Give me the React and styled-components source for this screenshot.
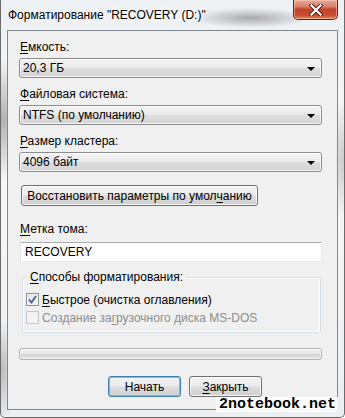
import React from 'react';
import styled, {createGlobalStyle} from 'styled-components';

const GlobalStyle = createGlobalStyle`
  html, body {
    margin:           0;
    padding:          0;
    width:            345px;
    height:           418px;
    overflow:         hidden;
    background:       #ffffff;
  }
  body {
    font-family:      "Liberation Sans", Arial, sans-serif;
    font-size:        12px;
    color:            #000;
  }
`;

const Window = styled.div`
  position:         relative;
  box-sizing:       border-box;
  width:            345px;
  height:           418px;
  display:          flex;
  flex-direction:   column;
  padding:          0 6px 7px 6px;
  border-left:      1px solid #6b6b6b;
  border-right:     1px solid #6b6b6b;
  border-bottom:    1px solid #6b6b6b;
  border-radius:    0 0 5px 5px;
  background:
    radial-gradient(ellipse 40px 60px at 0px 120px, rgba(120,120,120,0.55), rgba(120,120,120,0) 100%),
    radial-gradient(ellipse 20px 50px at 0px 370px, rgba(120,120,120,0.45), rgba(120,120,120,0) 100%),
    radial-gradient(ellipse 60px 10px at 250px 18px, rgba(110,110,110,0.55), rgba(110,110,110,0) 100%),
    radial-gradient(ellipse 30px 60px at 345px 160px, rgba(150,150,150,0.45), rgba(150,150,150,0) 100%),
    linear-gradient(180deg, #eef1f4 0%, #f6f7f8 40%, #eceff2 100%);
`;

const TitleBar = styled.div`
  height:           30px;
  display:          flex;
  align-items:      flex-start;
  justify-content:  space-between;
  margin-left:      -6px;
  margin-right:     -6px;
  padding-left:     7px;
  padding-right:    6px;
`;

const Title = styled.div`
  margin-top:       8px;
  font-size:        12px;
  color:            #000;
  text-shadow:      0 0 6px #fff, 0 0 8px #fff;
  white-space:      nowrap;
`;

const CloseButton = styled.div`
  width:            45px;
  height:           20px;
  box-sizing:       border-box;
  display:          flex;
  align-items:      center;
  justify-content:  center;
  border:           1px solid #5e2418;
  border-top:       none;
  border-radius:    0 0 5px 5px;
  background:       linear-gradient(180deg, #e9a99a 0%, #d77e6a 35%, #c3412a 50%, #c84d30 80%, #e08a5e 100%);
  box-shadow:       inset 0 0 0 1px rgba(255,210,190,0.55);
`;

const Client = styled.div`
  flex:             1;
  box-sizing:       border-box;
  background:       #f0f0f0;
  border:           1px solid #828790;
  padding:          9px 15px 0 11px;
  display:          flex;
  flex-direction:   column;
`;

const Label = styled.div`
  line-height:      15px;
  height:           15px;
  padding-left:     1px;
  white-space:      nowrap;
`;

const Key = styled.span`
  text-decoration:  underline;
  text-underline-offset: 2px;
`;

const Field = styled.div`
  display:          flex;
  flex-direction:   column;
  gap:              ${p => (p.gap === undefined ? 3 : p.gap)}px;
  margin-bottom:    ${p => (p.after === undefined ? 9 : p.after)}px;
`;

const Combo = styled.div`
  height:           20px;
  box-sizing:       border-box;
  border:           1px solid #8c8c8c;
  border-radius:    3px;
  background:       linear-gradient(180deg, #f3f3f3 0%, #ebebeb 48%, #dddddd 52%, #d4d4d4 100%);
  box-shadow:       inset 0 0 0 1px rgba(255,255,255,0.7);
  display:          flex;
  align-items:      center;
  justify-content:  space-between;
  padding:          0 6px 0 3px;
`;

const Arrow = styled.div`
  width:            0;
  height:           0;
  border-left:      4px solid transparent;
  border-right:     4px solid transparent;
  border-top:       4px solid #000;
  margin-top:       1px;
`;

const Button = styled.div`
  box-sizing:       border-box;
  height:           21px;
  width:            ${p => p.width}px;
  margin-left:      ${p => p.indent || 0}px;
  display:          flex;
  align-items:      center;
  justify-content:  center;
  border:           1px solid ${p => (p.primary ? '#3c7fb1' : '#707070')};
  border-radius:    3px;
  background:       linear-gradient(180deg, #f2f2f2 0%, #ebebeb 48%, #dddddd 52%, #cfcfcf 100%);
  box-shadow:       inset 0 0 0 1px ${p => (p.primary ? '#48d2fb' : 'rgba(255,255,255,0.8)')};
  white-space:      nowrap;
`;

const Input = styled.div`
  height:           20px;
  box-sizing:       border-box;
  background:       #fff;
  border:           1px solid #e3e9ef;
  border-top-color: #abadb3;
  border-left-color:#e2e3ea;
  display:          flex;
  align-items:      center;
  padding-left:     4px;
  margin-left:      1px;
`;

const GroupBox = styled.fieldset`
  margin:           0 1px 15px 3px;
  padding:          7px 0 7px 3px;
  border:           1px solid #d5dfe5;
  border-radius:    3px;
  box-shadow:       inset 0 0 0 1px #fff;
  display:          flex;
  flex-direction:   column;
  gap:              3px;
`;

const Legend = styled.legend`
  padding:          0 2px;
  margin-left:      2px;
  line-height:      15px;
`;

const CheckRow = styled.div`
  display:          flex;
  align-items:      center;
  gap:              3px;
  height:           15px;
  color:            ${p => (p.disabled ? '#8d8d8d' : '#000')};
  white-space:      nowrap;
`;

const Box = styled.div`
  width:            13px;
  height:           13px;
  box-sizing:       border-box;
  border:           1px solid ${p => (p.disabled ? '#c8c8c8' : '#8e8f8f')};
  background:       ${p => (p.disabled ? '#f4f4f4' : 'linear-gradient(135deg, #dcdcdc 0%, #f6f6f6 100%)')};
  box-shadow:       inset 0 0 0 1px ${p => (p.disabled ? '#f0f0f0' : '#f4f4f4')};
  display:          flex;
  align-items:      center;
  justify-content:  center;
`;

const Progress = styled.div`
  height:           12px;
  box-sizing:       border-box;
  border:           1px solid #b2b2b2;
  border-radius:    3px;
  background:       linear-gradient(180deg, #f3f3f3 0%, #e6e6e6 45%, #d4d4d4 55%, #e2e2e2 100%);
  box-shadow:       inset 0 0 0 1px rgba(255,255,255,0.6);
  margin:           0 0 16px 0;
`;

const Actions = styled.div`
  display:          flex;
  gap:              8px;
  padding-left:     89px;
`;

const Watermark = styled.div`
  position:         absolute;
  right:            6px;
  bottom:           5px;
  padding:          0 2px 0 3px;
  background:       rgba(255,255,255,0.9);
  font-family:      "Liberation Mono", "DejaVu Sans Mono", monospace;
  font-weight:      bold;
  font-size:        15px;
  line-height:      15px;
  color:            #000;
`;

const CloseIcon = () => (
  <svg width="14" height="12" viewBox="0 0 14 12">
    <path d="M2.5 1.5 L11.5 10.5 M11.5 1.5 L2.5 10.5" stroke="#4a1a10" strokeWidth="4" strokeLinecap="square"/>
    <path d="M2.5 1.5 L11.5 10.5 M11.5 1.5 L2.5 10.5" stroke="#ffffff" strokeWidth="2.2" strokeLinecap="square"/>
  </svg>
);

const Check = () => (
  <svg width="9" height="9" viewBox="0 0 9 9">
    <path d="M1 4.5 L3.5 7.5 L8 1" fill="none" stroke="#4a5f97" strokeWidth="1.8"/>
  </svg>
);

const ComboBox = (props) => (
  <Combo>
    <span>{props.value}</span>
    <Arrow/>
  </Combo>
);

export default function App() {
  return (
    <>
      <GlobalStyle/>
      <Window>
        <TitleBar>
          <Title>Форматирование "RECOVERY (D:)"</Title>
          <CloseButton><CloseIcon/></CloseButton>
        </TitleBar>
        <Client>
          <Field>
            <Label><Key>Е</Key>мкость:</Label>
            <ComboBox value="20,3 ГБ"/>
          </Field>
          <Field>
            <Label><Key>Ф</Key>айловая система:</Label>
            <ComboBox value="NTFS (по умолчанию)"/>
          </Field>
          <Field after={13}>
            <Label><Key>Р</Key>азмер кластера:</Label>
            <ComboBox value="4096 байт"/>
          </Field>
          <Field after={16}>
            <Button indent={2} width={237}>Восстановить параметры по умол<Key>ч</Key>анию</Button>
          </Field>
          <Field gap={5} after={8}>
            <Label><Key>М</Key>етка тома:</Label>
            <Input>RECOVERY</Input>
          </Field>
          <GroupBox>
            <Legend><Key>С</Key>пособы форматирования:</Legend>
            <CheckRow>
              <Box><Check/></Box>
              <span><Key>Б</Key>ыстрое (очистка оглавления)</span>
            </CheckRow>
            <CheckRow disabled>
              <Box disabled/>
              <span>Создание за<Key>г</Key>рузочного диска MS-DOS</span>
            </CheckRow>
          </GroupBox>
          <Progress/>
          <Actions>
            <Button primary width={73}>Начать</Button>
            <Button width={73}><Key>З</Key>акрыть</Button>
          </Actions>
        </Client>
        <Watermark>2notebook.net</Watermark>
      </Window>
    </>
  );
}
